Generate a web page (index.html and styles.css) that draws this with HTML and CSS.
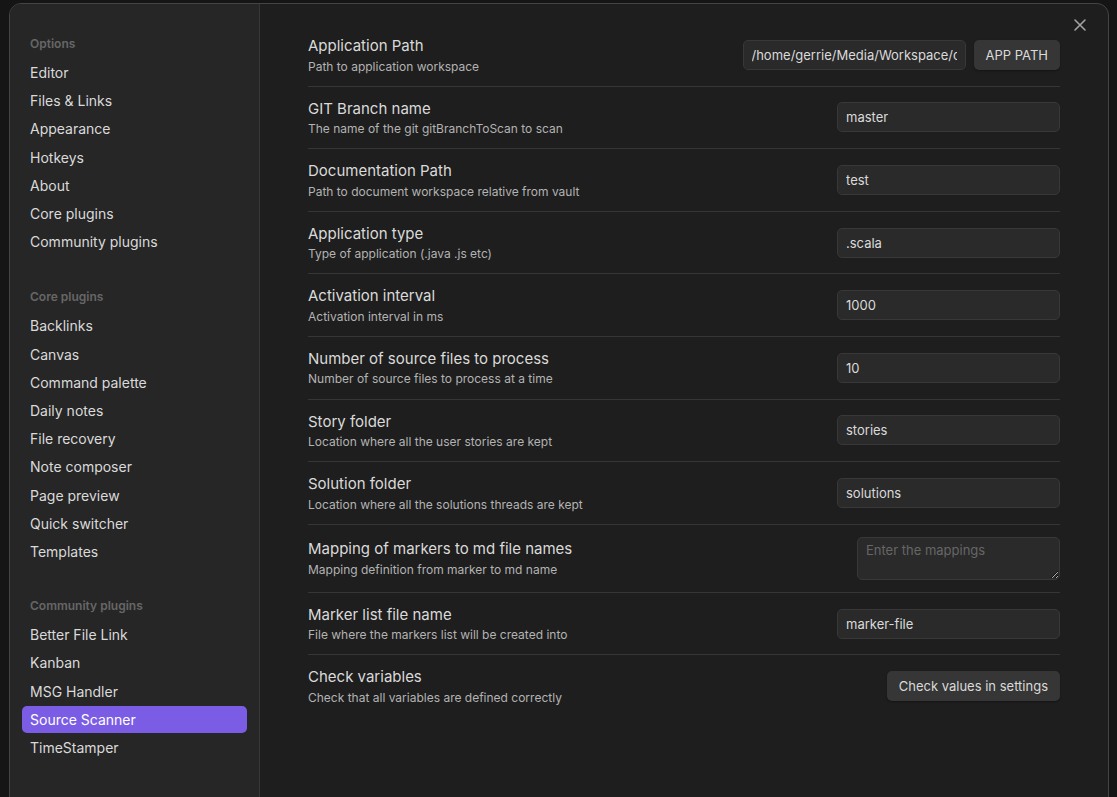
FILE: index.html
```html
<!DOCTYPE html>
<html lang="en">
<head>
<meta charset="utf-8">
<title>Settings</title>
<link rel="stylesheet" href="styles.css">
</head>
<body>
<div class="modal">
  <button class="close" aria-label="Close">
    <svg width="14" height="14" viewBox="0 0 14 14"><path d="M2 2 L12 12 M12 2 L2 12" stroke="#a3a3a3" stroke-width="1.6" stroke-linecap="round" fill="none"/></svg>
  </button>
  <nav class="sidebar">
    <div class="group">
      <div class="group-title">Options</div>
      <div class="nav-item">Editor</div>
      <div class="nav-item">Files &amp; Links</div>
      <div class="nav-item">Appearance</div>
      <div class="nav-item">Hotkeys</div>
      <div class="nav-item">About</div>
      <div class="nav-item">Core plugins</div>
      <div class="nav-item">Community plugins</div>
    </div>
    <div class="group">
      <div class="group-title">Core plugins</div>
      <div class="nav-item">Backlinks</div>
      <div class="nav-item">Canvas</div>
      <div class="nav-item">Command palette</div>
      <div class="nav-item">Daily notes</div>
      <div class="nav-item">File recovery</div>
      <div class="nav-item">Note composer</div>
      <div class="nav-item">Page preview</div>
      <div class="nav-item">Quick switcher</div>
      <div class="nav-item">Templates</div>
    </div>
    <div class="group">
      <div class="group-title">Community plugins</div>
      <div class="nav-item">Better File Link</div>
      <div class="nav-item">Kanban</div>
      <div class="nav-item">MSG Handler</div>
      <div class="nav-item active">Source Scanner</div>
      <div class="nav-item">TimeStamper</div>
    </div>
  </nav>
  <main class="content">
    <div class="setting">
      <div class="info"><div class="name">Application Path</div><div class="desc">Path to application workspace</div></div>
      <div class="control"><input class="text" type="text" value="/home/gerrie/Media/Workspace/code"><button class="btn">APP PATH</button></div>
    </div>
    <div class="setting">
      <div class="info"><div class="name">GIT Branch name</div><div class="desc">The name of the git gitBranchToScan to scan</div></div>
      <div class="control"><input class="text" type="text" value="master"></div>
    </div>
    <div class="setting">
      <div class="info"><div class="name">Documentation Path</div><div class="desc">Path to document workspace relative from vault</div></div>
      <div class="control"><input class="text" type="text" value="test"></div>
    </div>
    <div class="setting">
      <div class="info"><div class="name">Application type</div><div class="desc">Type of application (.java .js etc)</div></div>
      <div class="control"><input class="text" type="text" value=".scala"></div>
    </div>
    <div class="setting">
      <div class="info"><div class="name">Activation interval</div><div class="desc">Activation interval in ms</div></div>
      <div class="control"><input class="text" type="text" value="1000"></div>
    </div>
    <div class="setting">
      <div class="info"><div class="name">Number of source files to process</div><div class="desc">Number of source files to process at a time</div></div>
      <div class="control"><input class="text" type="text" value="10"></div>
    </div>
    <div class="setting">
      <div class="info"><div class="name">Story folder</div><div class="desc">Location where all the user stories are kept</div></div>
      <div class="control"><input class="text" type="text" value="stories"></div>
    </div>
    <div class="setting">
      <div class="info"><div class="name">Solution folder</div><div class="desc">Location where all the solutions threads are kept</div></div>
      <div class="control"><input class="text" type="text" value="solutions"></div>
    </div>
    <div class="setting">
      <div class="info"><div class="name">Mapping of markers to md file names</div><div class="desc">Mapping definition from marker to md name</div></div>
      <div class="control"><textarea class="area" placeholder="Enter the mappings"></textarea></div>
    </div>
    <div class="setting">
      <div class="info"><div class="name">Marker list file name</div><div class="desc">File where the markers list will be created into</div></div>
      <div class="control"><input class="text" type="text" value="marker-file"></div>
    </div>
    <div class="setting">
      <div class="info"><div class="name">Check variables</div><div class="desc">Check that all variables are defined correctly</div></div>
      <div class="control"><button class="btn">Check values in settings</button></div>
    </div>
  </main>
</div>
</body>
</html>
```
FILE: styles.css
```css
* { box-sizing: border-box; }
html, body { margin: 0; padding: 0; height: 100%; }
body {
  background: #151515;
  font-family: Inter, "Noto Sans", "Liberation Sans", sans-serif;
  color: #dadada;
  overflow: hidden;
  padding: 3px 0 0 9px;
}
.modal {
  position: relative;
  width: 1100px;
  height: 820px;
  border: 1px solid #444;
  border-radius: 12px;
  background: #1e1e1e;
  display: flex;
  overflow: hidden;
}
.close {
  position: absolute;
  top: 10px;
  right: 17px;
  width: 22px;
  height: 22px;
  padding: 0;
  border: 0;
  background: transparent;
  display: flex;
  align-items: center;
  justify-content: center;
}
.sidebar {
  width: 250px;
  flex: none;
  background: #262626;
  border-right: 1px solid #363636;
  padding: 32px 12px 0;
}
.group { margin-bottom: 34px; }
.group + .group + .group { margin-top: -1px; }
.group-title {
  font-size: 12px;
  font-weight: 600;
  color: #666;
  line-height: 16px;
  padding: 0 8px;
  margin-bottom: 7px;
}
.nav-item {
  font-size: 14px;
  line-height: 19.2px;
  padding: 4px 8px;
  margin-bottom: 1px;
  border-radius: 5px;
  color: #dadada;
}
.nav-item.active {
  background: #7b5ce5;
  color: #fff;
}
.content {
  flex: 1;
  padding: 20px 48px 0;
}
.setting {
  display: flex;
  align-items: center;
  justify-content: space-between;
  padding: 12px 0;
  border-top: 1px solid #363636;
}
.setting:first-child { border-top: 0; }
.name {
  font-size: 15px;
  line-height: 19.5px;
  color: #dadada;
}
.desc {
  font-size: 12px;
  line-height: 15.1px;
  padding-top: 3px;
  color: #b3b3b3;
}
.control {
  display: flex;
  align-items: center;
  gap: 8px;
}
.text, .area {
  font-family: Inter, "Noto Sans", "Liberation Sans", sans-serif;
  font-size: 13px;
  color: #dadada;
  background: #2a2a2a;
  border: 1px solid #383838;
  border-radius: 5px;
  padding: 0 8px;
  height: 30px;
  width: 223px;
  outline: none;
}
.area {
  width: 203px;
  height: 43px;
  padding: 4px 8px;
  resize: vertical;
  display: block;
}
.area::placeholder { color: #666; }
.btn {
  font-family: Inter, "Noto Sans", "Liberation Sans", sans-serif;
  font-size: 13px;
  color: #dadada;
  background: #363636;
  border: 0;
  border-radius: 5px;
  height: 30px;
  padding: 0 12px;
  box-shadow: 0 1px 2px rgba(0,0,0,0.35);
}
```
